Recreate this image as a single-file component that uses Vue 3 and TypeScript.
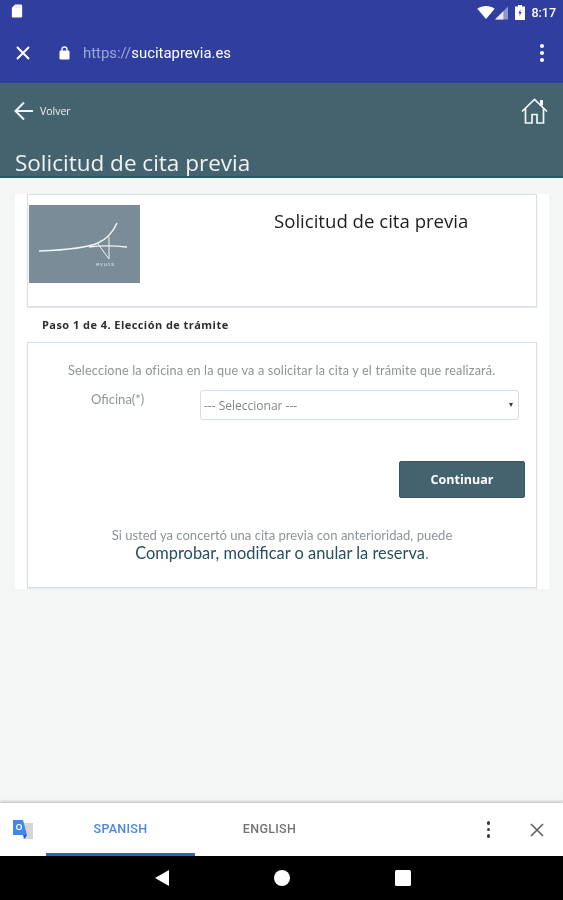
<script setup lang="ts">
const tabs = [
  { label: 'SPANISH', active: true },
  { label: 'ENGLISH', active: false },
]
</script>

<template>
  <div class="screen">
    <div class="status-bar">
      <svg class="sd-icon" width="12" height="14" viewBox="0 0 12 15">
        <path d="M4 .5h6a1.5 1.5 0 0 1 1.5 1.5v11a1.5 1.5 0 0 1-1.5 1.500H2A1.500 1.500 0 0 1 .5 13V4z" fill="#fff" />
        <path d="M5 1.500v3M7 1.500v3M9 1.500v3" stroke="#c9cde6" stroke-width=".7" />
      </svg>
      <div class="status-right">
        <svg width="18" height="13" viewBox="0 0 16 12"><path d="M0 2.500C4.500-.8 11.500-.8 16 2.500L8 12z" fill="#fff" /></svg>
        <svg class="signal" width="13" height="14" viewBox="0 0 14 14"><path d="M14 0v14H0z" fill="#8f96c8" /><path d="M9 5v9H0z" fill="#e6e7f2" /></svg>
        <svg class="battery" width="10" height="15" viewBox="0 0 10 15">
          <path d="M3 0h4v1.500h3V15H0V1.500h3z" fill="#fff" />
          <path d="M5.500 4 3.500 8.500h1.300L4.500 11.500 6.500 7H5.200z" fill="#303f9f" />
        </svg>
        <span class="clock">8:17</span>
      </div>
    </div>

    <div class="toolbar">
      <svg class="close-icon" width="14" height="14" viewBox="0 0 14 14"><path d="M1 1l12 12M13 1 1 13" stroke="#fff" stroke-width="2" /></svg>
      <svg class="lock-icon" width="11" height="14" viewBox="0 0 11 14">
        <path d="M3 5V3.500a2.500 2.500 0 0 1 5 0V5" fill="none" stroke="#fff" stroke-width="1.300" />
        <rect x=".5" y="4.500" width="10" height="9" rx="1.200" fill="#fff" />
      </svg>
      <div class="url"><span class="url-scheme">https://</span>sucitaprevia.es</div>
      <div class="kebab kebab-light"><i /><i /><i /></div>
    </div>

    <header class="site-header">
      <div class="nav-row">
        <div class="back">
          <svg width="20" height="20" viewBox="0 0 20 20"><path d="M19 10H2M10 1.500 1.500 10l8.500 8.500" fill="none" stroke="#eef3f4" stroke-width="2" /></svg>
          <span>Volver</span>
        </div>
        <svg class="home" width="27" height="26" viewBox="0 0 27 26" fill="none" stroke="#f2f6f7" stroke-width="1.700">
          <path d="M1 13.500 13.500 1.500 26 13.500M4.500 10.500V25h6.500v-8.500h5V25h6.500V10.500" />
          <path d="M20.500 2v5.500" stroke-width="3" />
        </svg>
      </div>
      <h1>Solicitud de cita previa</h1>
    </header>

    <main class="content">
      <div class="panel">
        <section class="card head-card">
          <div class="logo">
            <svg width="111" height="78" viewBox="0 0 111 78" fill="none" stroke="#f1f4f5">
              <path d="M10 46C35 45 58 43 69 38 78 34 84 27 88 18" stroke-width="1.500" />
              <path d="M60 42C75 40 88 41 98 42" stroke-width="1.300" />
              <path d="M69 39 80 54 80 32" stroke-width="1" />
              <text x="67" y="61" class="logo-word">evuts</text>
            </svg>
          </div>
          <h2>Solicitud de cita previa</h2>
        </section>

        <p class="step">Paso 1 de 4. Elección de trámite</p>

        <section class="card form-card">
          <p class="intro">Seleccione la oficina en la que va a solicitar la cita y el trámite que realizará.</p>
          <div class="field">
            <label>Oficina(*)</label>
            <div class="select">
              <span>--- Seleccionar ---</span>
              <i class="caret" />
            </div>
          </div>
          <div class="actions">
            <button type="button">Continuar</button>
          </div>
          <div class="note">
            <p>Si usted ya concertó una cita previa con anterioridad, puede</p>
            <p class="link-line"><a>Comprobar, modificar o anular la reserva</a>.</p>
          </div>
        </section>
      </div>
    </main>

    <div class="translate-bar">
      <svg class="translate-icon" width="22" height="22" viewBox="0 0 22 22">
        <path d="M9 4h12v16H11z" fill="#d5d5d5" />
        <path d="M1 1h10l4 15H1z" fill="#4285f4" />
        <path d="M11 16h4l-2.500 4z" fill="#2a56c6" />
        <circle cx="7" cy="8" r="2.500" fill="none" stroke="#fff" stroke-width="1.200" />
      </svg>
      <div class="tabs">
        <div v-for="tab in tabs" :key="tab.label" class="tab" :class="{ active: tab.active }">{{ tab.label }}</div>
      </div>
      <div class="kebab kebab-dark"><i /><i /><i /></div>
      <svg class="bar-close" width="14" height="14" viewBox="0 0 14 14"><path d="M1 1l12 12M13 1 1 13" stroke="#5f5f5f" stroke-width="1.600" /></svg>
    </div>

    <div class="nav-bar">
      <svg width="14" height="16" viewBox="0 0 14 16"><path d="M14 0v16L0 8z" fill="#fff" /></svg>
      <svg width="16" height="16" viewBox="0 0 16 16"><circle cx="8" cy="8" r="8" fill="#fff" /></svg>
      <svg width="16" height="16" viewBox="0 0 16 16"><rect width="16" height="16" rx="1.500" fill="#fff" /></svg>
    </div>
  </div>
</template>

<style>
html,
body {
  margin: 0;
  background: #f4f5f5;
}
</style>

<style scoped>
.screen {
  width: 563px;
  height: 900px;
  display: flex;
  flex-direction: column;
  overflow: hidden;
  background: #f4f5f5;
  font-family: "Open Sans", sans-serif;
  filter: blur(0.6px);
}

.status-bar {
  height: 28px;
  flex: none;
  box-sizing: border-box;
  padding: 4px 7px 0 11px;
  display: flex;
  justify-content: space-between;
  align-items: flex-start;
  background: #303f9f;
}

.status-right {
  display: flex;
  align-items: center;
  color: #fff;
  height: 17px;
}

.signal {
  margin-left: 0;
}

.battery {
  margin-left: 7px;
}

.clock {
  margin-left: 6px;
  font: 500 12.500px Roboto, sans-serif;
}

.toolbar {
  height: 55px;
  flex: none;
  box-sizing: border-box;
  padding: 0 19px 5px 16px;
  display: flex;
  align-items: center;
  background: #303f9f;
}

.lock-icon {
  margin-left: 29px;
}

.url {
  margin-left: 13px;
  flex: 1;
  font: 400 14.900px Roboto, sans-serif;
  color: #fff;
}

.url-scheme {
  color: #9ea6d6;
}

.kebab {
  display: flex;
  flex-direction: column;
  align-items: center;
}

.kebab i {
  display: block;
  border-radius: 50%;
}

.kebab-light {
  gap: 3px;
}

.kebab-light i {
  width: 4px;
  height: 4px;
  background: #fff;
}

.kebab-dark {
  gap: 3px;
  margin-right: 40px;
}

.kebab-dark i {
  width: 3.500px;
  height: 3.500px;
  background: #3c3c3c;
}

.site-header {
  height: 95px;
  flex: none;
  box-sizing: border-box;
  padding: 0 15px;
  overflow: hidden;
  background: #44636f;
  border-bottom: 2px solid #2a5a62;
  color: #eef3f4;
}

.nav-row {
  height: 53px;
  display: flex;
  justify-content: space-between;
  align-items: center;
  padding-top: 4px;
  box-sizing: border-box;
}

.back {
  display: flex;
  align-items: center;
  gap: 6px;
  margin: -1px 0 0 -1px;
  font-size: 10.500px;
}

.home {
  margin-top: -2px;
}

h1 {
  margin: 13px 0 0;
  font-size: 22.500px;
  font-weight: 400;
  line-height: 28px;
}

.content {
  flex: 1;
  padding: 16px 14px 0 15px;
  min-height: 0;
}

.panel {
  height: 395px;
  box-sizing: border-box;
  padding: 0 12px;
  background: #fff;
}

.card {
  box-sizing: border-box;
  background: #fff;
  border: 1px solid #d7dfe9;
  box-shadow: 0 1px 1px #e4e8ef;
}

.head-card {
  height: 113px;
  padding: 10px 1px 0;
  display: flex;
  align-items: flex-start;
}

.logo {
  width: 111px;
  height: 78px;
  flex: none;
  background: #7a8c98;
}

.logo svg {
  display: block;
}

.logo-word {
  font: 400 5.500px "Open Sans", sans-serif;
  fill: #e4e9eb;
  stroke: none;
  letter-spacing: 1px;
}

h2 {
  margin: 3px 0 0 134px;
  font-size: 18.600px;
  font-weight: 400;
  line-height: 26px;
  color: #1e1e1e;
}

.step {
  margin: 0;
  height: 35px;
  padding: 11px 0 0 15px;
  box-sizing: border-box;
  font-size: 11px;
  letter-spacing: .45px;
  line-height: 14px;
  font-weight: 700;
  color: #2e2e2e;
}

.form-card {
  height: 246px;
  padding: 19px 11px 0 0;
  font-family: Lato, sans-serif;
  color: #8d9499;
}

.intro {
  margin: 0;
  padding-left: 40px;
  font-size: 12.700px;
  line-height: 17px;
  white-space: nowrap;
  letter-spacing: .15px;
}

.field {
  margin-top: 11px;
  display: flex;
  align-items: flex-start;
}

label {
  width: 109px;
  margin-left: 63px;
  margin-top: 1px;
  font-size: 13px;
  line-height: 16px;
}

.select {
  width: 319px;
  height: 30px;
  box-sizing: border-box;
  padding: 0 5px 0 3px;
  display: flex;
  justify-content: space-between;
  align-items: center;
  background: #fff;
  border: 1px solid #d4deea;
  border-radius: 3px;
  font: 400 12px "Open Sans", sans-serif;
  color: #80868b;
}

.caret {
  width: 0;
  height: 0;
  border: 2.500px solid transparent;
  border-top: 4px solid #30383d;
  border-bottom: 0;
}

.actions {
  display: flex;
  justify-content: flex-end;
  margin-top: 41px;
}

button {
  width: 126px;
  height: 37px;
  padding: 0;
  background: #44636f;
  border: 1px solid #3a5763;
  border-radius: 2px;
  color: #fff;
  font: 700 12.500px "Open Sans", sans-serif;
}

.note {
  margin-top: 29px;
  margin-right: -11px;
  text-align: center;
}

.note p {
  margin: 0;
  font-size: 13.050px;
  line-height: 17px;
}

.note .link-line {
  font-size: 16.400px;
  line-height: 18px;
}

.link-line a {
  color: #26505f;
}

.translate-bar {
  height: 53px;
  flex: none;
  display: flex;
  align-items: center;
  padding: 0 19px 0 12px;
  box-sizing: border-box;
  background: #fff;
  box-shadow: 0 -2px 2px rgba(0, 0, 0, .16);
  position: relative;
}

.translate-icon {
  flex: none;
}

.tabs {
  margin-left: 12px;
  flex: 1;
  height: 100%;
  display: flex;
}

.tab {
  width: 149px;
  height: 100%;
  box-sizing: border-box;
  padding-top: 1px;
  border-bottom: 3px solid transparent;
  display: flex;
  align-items: center;
  justify-content: center;
  font: 500 12.500px Roboto, sans-serif;
  letter-spacing: .3px;
  color: #737373;
}

.tab.active {
  color: #4b86e0;
  border-bottom-color: #2f62c8;
}

.nav-bar {
  height: 44px;
  flex: none;
  display: flex;
  justify-content: center;
  align-items: center;
  gap: 105px;
  padding-left: 2px;
  background: #000;
}
</style>
